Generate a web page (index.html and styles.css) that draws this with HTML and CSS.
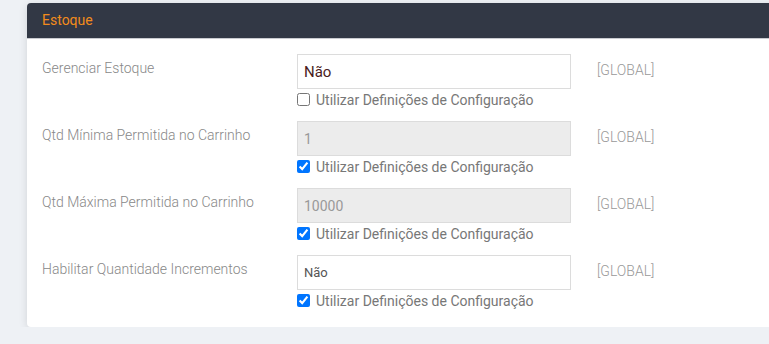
FILE: index.html
```html
<!DOCTYPE html>
<html lang="pt-BR">
<head>
<meta charset="UTF-8">
<meta name="viewport" content="width=device-width, initial-scale=1.0">
<title>Estoque</title>
<link rel="stylesheet" href="styles.css">
</head>
<body>
<div class="card">
  <div class="card-head">Estoque</div>
  <div class="card-body">

    <div class="row">
      <label class="lbl">Gerenciar Estoque</label>
      <div class="field">
        <div class="input active">Não</div>
        <label class="check"><input type="checkbox"> Utilizar Definições de Configuração</label>
      </div>
      <span class="scope">[GLOBAL]</span>
    </div>

    <div class="row">
      <label class="lbl">Qtd Mínima Permitida no Carrinho</label>
      <div class="field">
        <div class="input disabled">1</div>
        <label class="check"><input type="checkbox" checked> Utilizar Definições de Configuração</label>
      </div>
      <span class="scope">[GLOBAL]</span>
    </div>

    <div class="row">
      <label class="lbl">Qtd Máxima Permitida no Carrinho</label>
      <div class="field">
        <div class="input disabled">10000</div>
        <label class="check"><input type="checkbox" checked> Utilizar Definições de Configuração</label>
      </div>
      <span class="scope">[GLOBAL]</span>
    </div>

    <div class="row">
      <label class="lbl">Habilitar Quantidade Incrementos</label>
      <div class="field">
        <div class="input">Não</div>
        <label class="check"><input type="checkbox" checked> Utilizar Definições de Configuração</label>
      </div>
      <span class="scope">[GLOBAL]</span>
    </div>

  </div>
</div>
</body>
</html>
```

FILE: styles.css
```css
body {
  margin: 0;
  padding: 3px 0 0 27px;
  background-color: #eef1f5;
  font-family: Roboto, "Liberation Sans", sans-serif;
  font-size: 14px;
  color: #888;
  overflow: hidden;
}

.card {
  width: 760px;
  background-color: #fff;
  border-radius: 4px 0 0 4px;
  box-shadow: 0 2px 8px rgba(0, 0, 0, 0.12);
}

.card-head {
  height: 35px;
  line-height: 34px;
  padding-left: 15px;
  background-color: #323845;
  border-radius: 4px 0 0 0;
  border-bottom: 1px solid #c9cbd0;
  color: #f28c1c;
  font-size: 14px;
}

.card-body {
  padding: 15px 15px 16px;
}

.row {
  display: grid;
  grid-template-columns: 255px 274px auto;
  margin-bottom: 11px;
}

.row:last-child {
  margin-bottom: 0;
}

.lbl {
  padding-top: 4px;
  line-height: 20px;
  font-weight: 300;
}

.input {
  height: 35px;
  box-sizing: border-box;
  border: 1px solid #dcdcdc;
  padding: 0 6px;
  line-height: 34px;
  font-size: 13px;
  color: #555;
}

.input.active {
  color: #4a1c1c;
  font-size: 15px;
}

.input.disabled {
  background-color: #ececec;
  color: #999;
  font-size: 14px;
}

.check {
  display: flex;
  align-items: center;
  height: 21px;
  font-size: 14px;
  color: #777;
}

.check input {
  margin: 0 6px 0 0;
  width: 13px;
  height: 13px;
}

.scope {
  padding: 6px 0 0 26px;
  line-height: 20px;
  font-weight: 300;
  color: #999;
}
```
